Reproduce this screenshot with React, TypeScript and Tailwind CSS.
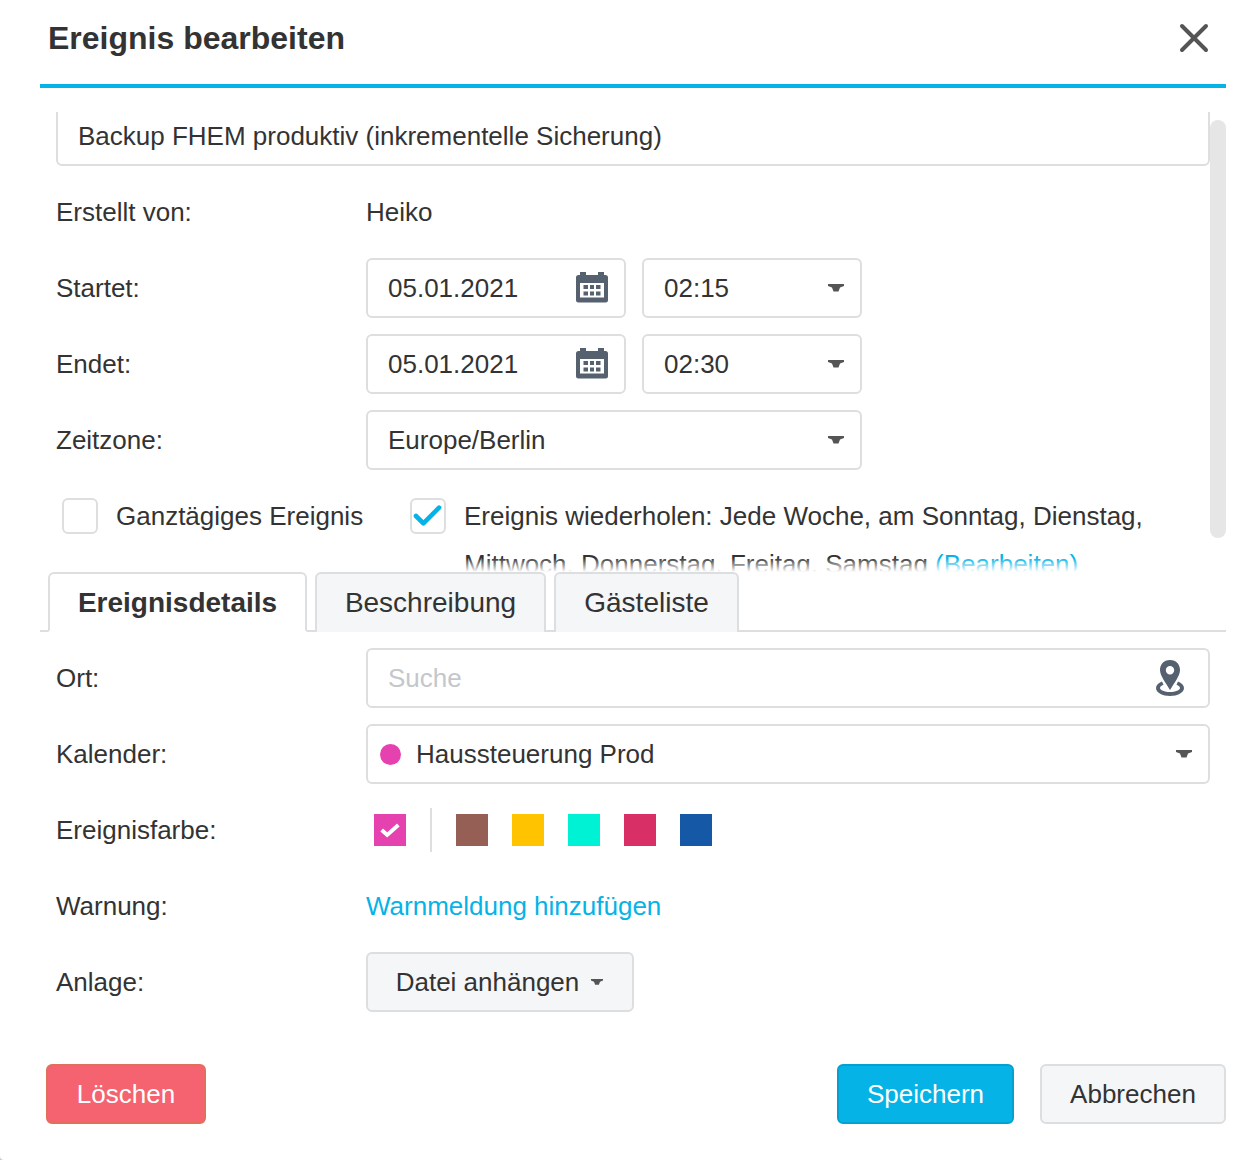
import React from 'react';
import { X } from 'lucide-react';

const Caret = ({ small }: { small?: boolean }) => (
    <svg viewBox="0 0 16 8" className={small ? 'w-[12px] h-[6px]' : 'w-[16px] h-[8px]'} fill="#555">
        <path d="M0 0H16V2L12 3.5L10.5 7.5H5.5L4 3.5L0 2Z" />
    </svg>
);

const CalendarIcon = () => (
    <svg viewBox="0 0 32 32" className="w-[32px] h-[32px] mb-[3px]" fill="#56616f">
        <path
            fillRule="evenodd"
            d="M4 1H10V4H22V1H28V4H29.5A2.5 2.5 0 0 1 32 6.5V29A2.5 2.5 0 0 1 29.5 31.5H2.5A2.5 2.5 0 0 1 0 29V6.5A2.5 2.5 0 0 1 2.5 4H4ZM4 12V26.5H28V12Z"
        />
        <path d="M7.5 14H12V18H7.5ZM14 14H18V18H14ZM20 14H24.5V18H20ZM7.5 20.5H12V24.5H7.5ZM14 20.5H18V24.5H14ZM20 20.5H24.5V24.5H20Z" />
    </svg>
);

const PinIcon = () => (
    <svg viewBox="0 0 28 36" className="w-[28px] h-[36px]" fill="#56616f">
        <path
            fillRule="evenodd"
            d="M14 0C7.5 0 4 4.7 4 10C4 16 10 23 14 30C18 23 24 16 24 10C24 4.7 20.5 0 14 0ZM14 6A4.2 4.2 0 1 1 14 14.4A4.2 4.2 0 0 1 14 6Z"
        />
        <path d="M6 21.5C2.5 23 0 25.2 0 28C0 32.5 6.5 36 14 36C21.5 36 28 32.5 28 28C28 25.2 25.5 23 22 21.5L20.5 24.7C22.8 25.6 24 26.8 24 28C24 30 19.5 32 14 32C8.5 32 4 30 4 28C4 26.8 5.2 25.6 7.5 24.7Z" />
    </svg>
);

const Field = ({ className, children }: { className: string; children: React.ReactNode }) => (
    <div className={`h-[60px] flex items-center border-2 border-[#dcdee0] rounded-[6px] bg-white ${className}`}>{children}</div>
);

const Row = ({ label, children }: { label: string; children: React.ReactNode }) => (
    <div className="flex items-center min-h-[60px] mb-[16px]">
        <div className="w-[310px] shrink-0">{label}</div>
        <div className="flex-1 flex items-center gap-[16px]">{children}</div>
    </div>
);

const DateField = ({ value }: { value: string }) => (
    <Field className="w-[260px] pl-[20px] pr-[16px] justify-between">
        <span>{value}</span>
        <CalendarIcon />
    </Field>
);

const TimeField = ({ value, className = 'w-[220px]' }: { value: string; className?: string }) => (
    <Field className={`${className} pl-[20px] pr-[16px] justify-between`}>
        <span>{value}</span>
        <Caret />
    </Field>
);

const Tab = ({ label, active }: { label: string; active?: boolean }) => (
    <div
        className={`h-[60px] flex items-center justify-center text-[28px] border-2 border-[#dcdee0] rounded-t-[6px] ${
            active ? 'w-[259px] pt-[2px] bg-white font-bold border-b-white' : 'bg-[#f5f6f8] border-b-0'
        } ${label === 'Beschreibung' ? 'w-[231px]' : ''} ${label === 'Gästeliste' ? 'w-[185px]' : ''}`}
    >
        {label}
    </div>
);

const swatches = ['bg-[#955f56]', 'bg-[#ffc300]', 'bg-[#00f2d5]', 'bg-[#d92f67]', 'bg-[#1558a5]'];

const App: React.FC = () => {
    return (
        <div className="w-[1260px] h-[1160px] bg-[#c8c8c8]">
            <div className="h-full bg-white rounded-bl-[4px] text-[#333] text-[26px] leading-[48px] font-['Liberation_Sans',Arial,sans-serif] pl-[40px] pr-[34px] overflow-hidden">
                <header className="h-[84px] flex items-center justify-between pl-[8px] pr-[8px]">
                    <h1 className="text-[32px] font-bold pb-[8px]">Ereignis bearbeiten</h1>
                    <X className="w-[48px] h-[48px] mb-[8px] text-[#555]" strokeWidth={2} />
                </header>
                <div className="h-[4px] bg-[#05b3e6]" />

                <div className="relative h-[460px] mt-[24px] overflow-hidden">
                    <div className="pl-[16px] pr-[16px] mt-[-6px]">
                        <Field className="px-[20px]">Backup FHEM produktiv (inkrementelle Sicherung)</Field>
                        <div className="h-[16px]" />
                        <Row label="Erstellt von:">Heiko</Row>
                        <Row label="Startet:">
                            <DateField value="05.01.2021" />
                            <TimeField value="02:15" />
                        </Row>
                        <Row label="Endet:">
                            <DateField value="05.01.2021" />
                            <TimeField value="02:30" />
                        </Row>
                        <Row label="Zeitzone:">
                            <TimeField value="Europe/Berlin" className="w-[496px]" />
                        </Row>
                        <div className="flex items-start pl-[6px] pt-[6px]">
                            <div className="w-[36px] h-[36px] mt-[6px] border-2 border-[#dcdee0] rounded-[6px] shrink-0" />
                            <span className="ml-[18px] w-[294px] shrink-0">Ganztägiges Ereignis</span>
                            <div className="w-[36px] h-[36px] mt-[6px] border-2 border-[#dcdee0] rounded-[6px] shrink-0 flex items-center justify-center">
                                <svg viewBox="0 0 32 26" className="w-[30px] h-[24px]" fill="none" stroke="#05b3e6" strokeWidth="5" strokeLinecap="round" strokeLinejoin="round">
                                    <path d="M3 13L11 21L28 4" />
                                </svg>
                            </div>
                            <span className="ml-[18px]">
                                Ereignis wiederholen: Jede Woche, am Sonntag, Dienstag, Mittwoch, Donnerstag, Freitag, Samstag{' '}
                                <span className="text-[#05b3e6]">(Bearbeiten)</span>
                            </span>
                        </div>
                    </div>
                    {/* fake scrollbar and bottom fade */}
                    <div className="absolute right-0 top-[8px] w-[16px] h-[418px] bg-[#e6e6e6] rounded-[8px]" />
                    <div className="absolute left-0 right-0 bottom-0 h-[14px] bg-gradient-to-b from-white/0 to-white" />
                </div>

                <div className="flex gap-[8px] pl-[8px] border-b-2 border-[#dcdee0] h-[60px]">
                    <Tab label="Ereignisdetails" active />
                    <Tab label="Beschreibung" />
                    <Tab label="Gästeliste" />
                </div>

                <div className="pl-[16px] pr-[16px] pt-[16px]">
                    <Row label="Ort:">
                        <Field className="flex-1 pl-[20px] pr-[24px] justify-between">
                            <span className="text-[#c4c7cb]">Suche</span>
                            <PinIcon />
                        </Field>
                    </Row>
                    <Row label="Kalender:">
                        <Field className="flex-1 pl-[12px] pr-[16px]">
                            <span className="w-[21px] h-[21px] rounded-full bg-[#e542b0]" />
                            <span className="ml-[15px] flex-1">Haussteuerung Prod</span>
                            <Caret />
                        </Field>
                    </Row>
                    <div className="flex items-center h-[44px] mt-[24px] mb-[30px]">
                        <div className="w-[310px] shrink-0">Ereignisfarbe:</div>
                        <div className="flex items-center pl-[8px]">
                            <div className="w-[32px] h-[32px] bg-[#e542b0] flex items-center justify-center">
                                <svg viewBox="0 0 18 14" className="w-[20px] h-[16px]" fill="none" stroke="white" strokeWidth="3.5">
                                    <path d="M1.5 7L6.5 11.5L16.5 2.5" />
                                </svg>
                            </div>
                            <div className="w-[2px] h-[44px] bg-[#dcdee0] ml-[24px] mr-[24px]" />
                            <div className="flex gap-[24px]">
                                {swatches.map(c => (
                                    <div key={c} className={`w-[32px] h-[32px] ${c}`} />
                                ))}
                            </div>
                        </div>
                    </div>
                    <div className="flex items-center h-[48px] mb-[22px]">
                        <div className="w-[310px] shrink-0">Warnung:</div>
                        <div className="text-[#05b3e6]">Warnmeldung hinzufügen</div>
                    </div>
                    <div className="flex items-center h-[60px]">
                        <div className="w-[310px] shrink-0">Anlage:</div>
                        <div className="w-[268px] h-[60px] flex items-center justify-center gap-[12px] pr-[1px] border-2 border-[#dcdee0] rounded-[6px] bg-[#f5f6f8]">
                            Datei anhängen
                            <Caret small />
                        </div>
                    </div>
                </div>

                <footer className="flex items-center justify-between mt-[52px] pl-[6px]">
                    <div className="w-[160px] h-[60px] flex items-center justify-center rounded-[6px] border-2 border-[#e0705c] bg-[#f56270] text-white">
                        Löschen
                    </div>
                    <div className="flex gap-[26px]">
                        <div className="w-[177px] h-[60px] flex items-center justify-center rounded-[6px] border-2 border-[#04a1d0] bg-[#05b3e6] text-white">
                            Speichern
                        </div>
                        <div className="w-[186px] h-[60px] flex items-center justify-center rounded-[6px] border-2 border-[#dcdee0] bg-[#f5f6f8]">
                            Abbrechen
                        </div>
                    </div>
                </footer>
            </div>
        </div>
    );
};

export default App;
